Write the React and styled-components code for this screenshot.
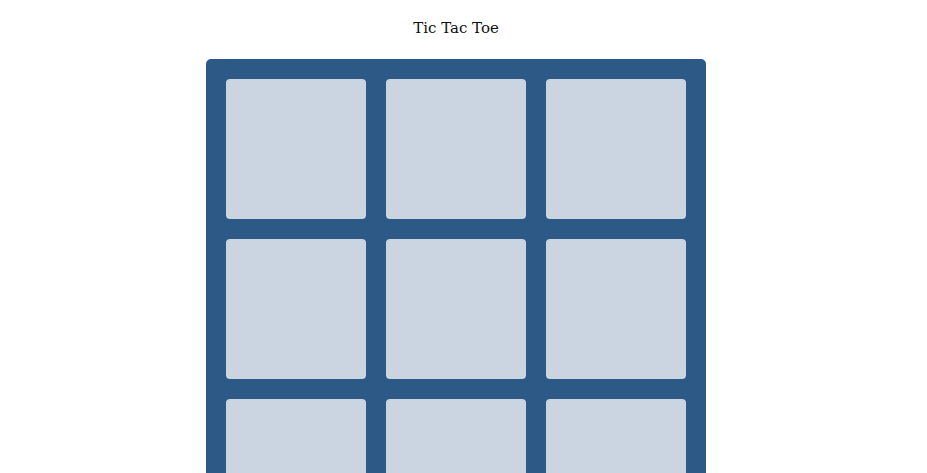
import React from "react";
import styled, { createGlobalStyle } from "styled-components";

const GlobalStyle = createGlobalStyle`
  body {
    margin: 0;
    background: #ffffff;
    font-family: "DejaVu Serif", serif;
  }
`;

// padding-right stands in for the scrollbar the page had
const Page = styled.div`
  display: flex;
  flex-direction: column;
  align-items: center;
  padding: 19px 15px 0 0;
`;

const Title = styled.div`
  font-size: 15px;
  line-height: 18px;
  color: #111;
`;

const Board = styled.div`
  margin-top: 22px;
  width: 500px;
  box-sizing: border-box;
  padding: 20px;
  background: #2c5985;
  border-radius: 5px;
  display: grid;
  grid-template-columns: repeat(3, 140px);
  grid-auto-rows: 140px;
  gap: 20px;
`;

const Cell = styled.button`
  border: 0;
  padding: 0;
  background: #cbd5e1;
  border-radius: 4px;
  cursor: pointer;
`;

const App = () => {
  const cells = Array.from({ length: 9 });
  return (
    <>
      <GlobalStyle />
      <Page>
        <Title>Tic Tac Toe</Title>
        <Board>
          {cells.map((_, i) => (
            <Cell key={i} />
          ))}
        </Board>
      </Page>
    </>
  );
};

export default App;
